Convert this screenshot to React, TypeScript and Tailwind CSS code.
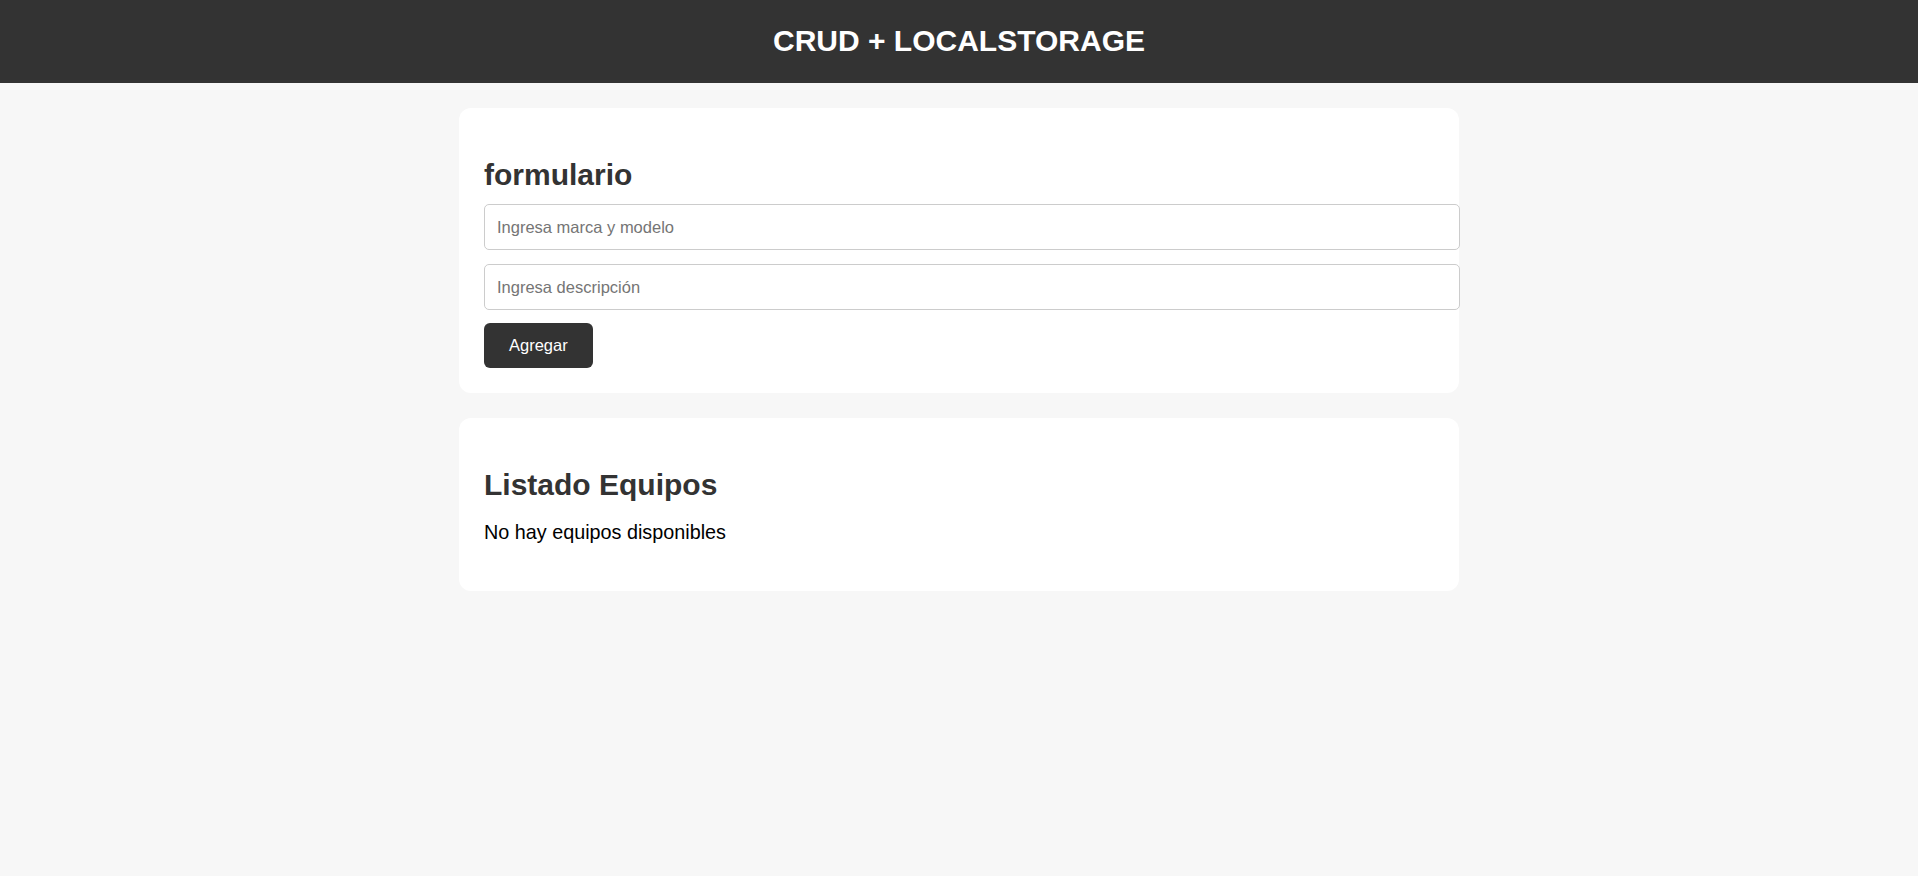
import React, { useState } from "react";

type Equipo = { id: number; nombre: string; descripcion: string };

export default function App() {
  const [nombre, setNombre] = useState("");
  const [descripcion, setDescripcion] = useState("");
  const [equipos, setEquipos] = useState<Equipo[]>([]);

  const agregar = () => {
    if (!nombre.trim()) return;
    setEquipos([...equipos, { id: Date.now(), nombre, descripcion }]);
    setNombre("");
    setDescripcion("");
  };

  return (
    <div className="min-h-[876px] bg-[#f7f7f7] font-['Liberation_Sans',Arial,sans-serif]">
      <header className="flex h-[83px] items-center justify-center bg-[#333333] pb-[2px]">
        <h1 className="text-[30px] font-bold leading-[35px] text-white">CRUD + LOCALSTORAGE</h1>
      </header>

      <main className="mx-auto flex w-[1000px] flex-col gap-[25px] pt-[25px]">
        <section className="rounded-xl bg-white p-[25px]">
          <h2 className="mt-[24px] mb-[12px] text-[30px] font-bold leading-[35px] text-[#333333]">
            formulario
          </h2>
          <input
            value={nombre}
            onChange={(e) => setNombre(e.target.value)}
            placeholder="Ingresa marca y modelo"
            className="block h-[46px] w-[976px] rounded-[5px] border border-[#cccccc] bg-white px-3 text-[16.5px] text-black outline-none placeholder:text-[#757575]"
          />
          <input
            value={descripcion}
            onChange={(e) => setDescripcion(e.target.value)}
            placeholder="Ingresa descripción"
            className="mt-[14px] block h-[46px] w-[976px] rounded-[5px] border border-[#cccccc] bg-white px-3 text-[16.5px] text-black outline-none placeholder:text-[#757575]"
          />
          <button
            onClick={agregar}
            className="mt-[13px] block h-[45px] cursor-pointer rounded-[6px] bg-[#333333] px-[25px] text-[16.5px] text-white"
          >
            Agregar
          </button>
        </section>

        <section className="rounded-xl bg-white p-[25px]">
          <h2 className="mt-[24px] mb-[19px] text-[30px] font-bold leading-[35px] text-[#333333]">
            Listado Equipos
          </h2>
          {equipos.length === 0 ? (
            <p className="mb-[22px] text-[19.8px] leading-[23px] text-black">No hay equipos disponibles</p>
          ) : (
            <ul className="mb-[22px] flex flex-col gap-2 text-[19.8px]">
              {equipos.map((eq) => (
                <li key={eq.id}>
                  <strong>{eq.nombre}</strong> — {eq.descripcion}
                </li>
              ))}
            </ul>
          )}
        </section>
      </main>
    </div>
  );
}
